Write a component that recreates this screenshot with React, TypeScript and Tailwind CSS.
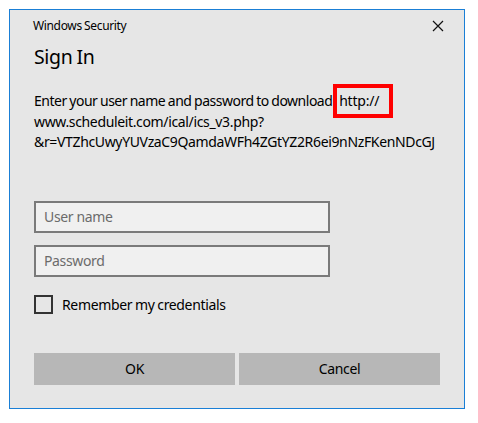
import React from 'react';

export default function App() {
  return (
    <div className="w-[478px] h-[423px] bg-white pt-[9px] pl-[9px]" style={{ fontFamily: '"Noto Sans", "Open Sans", sans-serif' }}>
      <div className="w-[456px] h-[400px] border border-[#1a7fd6] bg-[#e6e6e6] flex flex-col px-[24px] text-black tracking-[-0.35px] [word-spacing:-0.5px]">
        {/* title bar */}
        <div className="h-[31px] pt-[1px] flex items-center justify-between">
          <span className="text-[12px] -ml-[1px]">Windows Security</span>
          <svg width="12" height="12" viewBox="0 0 12 12" className="mr-[-4px]">
            <path d="M1 1 L11 11 M11 1 L1 11" stroke="#111" strokeWidth="1.2" />
          </svg>
        </div>

        <h1 className="text-[19.5px] leading-[28px] mt-[2px]">Sign In</h1>

        <p className="text-[14px] leading-[20.5px] mt-[20px]">
          <span className="tracking-[-0.5px]">Enter your user name and password to download</span>{' '}
          <span className="relative ml-[4px] tracking-[-0.2px]">
            http://
            <span className="absolute -left-[6px] -top-[7px] w-[60px] h-[34px] border-[4px] border-[#ff0000]" />
          </span>
          <br />
          www.scheduleit.com/ical/ics_v3.php?
          <br />
          &amp;r=VTZhcUwyYUVzaC9QamdaWFh4ZGtYZ2R6ei9nNzFKenNDcGJ
        </p>

        <div className="mt-[48px] flex flex-col gap-[12px]">
          <input
            placeholder="User name"
            className="w-[296px] h-[32px] border-2 border-[#7a7a7a] bg-[#f0f0f0] px-[8px] text-[14px] placeholder:text-[#6b6b6b] outline-none"
          />
          <input
            placeholder="Password"
            type="password"
            className="w-[296px] h-[32px] border-2 border-[#7a7a7a] bg-[#f0f0f0] px-[8px] text-[14px] placeholder:text-[#6b6b6b] outline-none"
          />
        </div>

        <label className="mt-[17px] flex items-center gap-[9px] text-[14px]">
          <span className="w-[19px] h-[19px] border-2 border-[#333333]" />
          Remember my credentials
        </label>

        <div className="mt-[38px] flex gap-[4px]">
          <button className="w-[201px] h-[32px] bg-[#b7b7b7] text-[14px]">OK</button>
          <button className="w-[201px] h-[32px] bg-[#b7b7b7] text-[14px]">Cancel</button>
        </div>
      </div>
    </div>
  );
}
